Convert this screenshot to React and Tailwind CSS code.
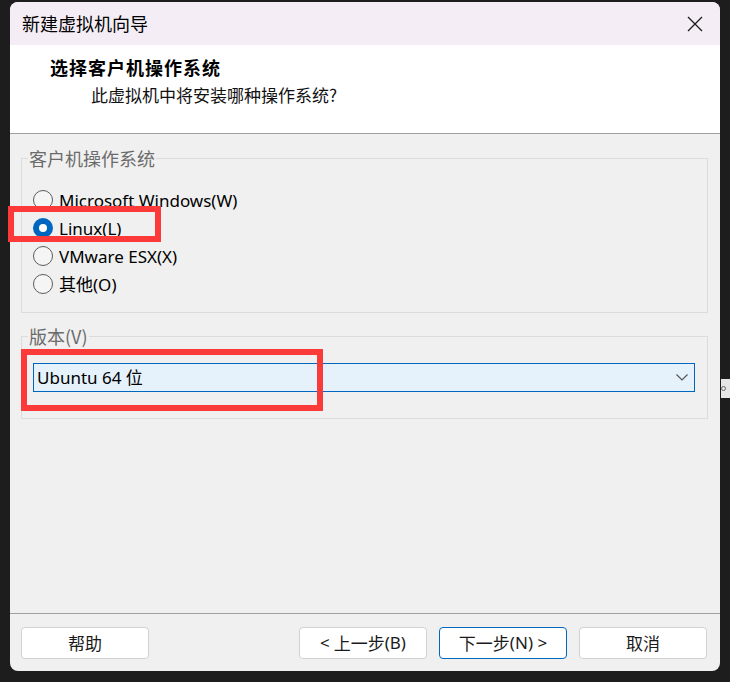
import React, { useState } from 'react';

const cjk = '"Noto Sans CJK SC", "Noto Sans", sans-serif';
const ui = '"Noto Sans", "Noto Sans CJK SC", sans-serif';

const Radio = ({ label, checked, onSelect }) => (
  <div className="flex items-center h-[28px] gap-[6px] cursor-default" onClick={onSelect}>
    {checked ? (
      <span className="w-[20px] h-[20px] rounded-full bg-[#0067c0] flex items-center justify-center">
        <span className="w-[8px] h-[8px] rounded-full bg-white" />
      </span>
    ) : (
      <span className="w-[20px] h-[20px] rounded-full border border-[#5c5c5c] bg-[#f5f5f5]" />
    )}
    <span className="text-[17px] text-black leading-none">{label}</span>
  </div>
);

const Button = ({ children, primary }) => (
  <button
    className={
      'w-[128px] h-[32px] rounded-[4px] bg-white text-[17px] text-[#1b1b1b] flex items-center justify-center border ' +
      (primary ? 'border-[#0067c0]' : 'border-[#d2d2d2]')
    }
  >
    {children}
  </button>
);

const App = () => {
  const [os, setOs] = useState('linux');
  const options = [
    { id: 'win', label: 'Microsoft Windows(W)' },
    { id: 'linux', label: 'Linux(L)' },
    { id: 'esx', label: 'VMware ESX(X)' },
    { id: 'other', label: '其他(O)' },
  ];

  return (
    <div className="w-[730px] h-[682px] bg-[#1d1d1d] pt-[2px] pl-[10px] relative" style={{ fontFamily: ui }}>
      <div className="w-[710px] h-[669px] rounded-[8px] overflow-hidden flex flex-col bg-[#f0f0f0]">
        {/* Title bar */}
        <div className="h-[43px] bg-[#f5edf6] flex items-center justify-between pl-[12px] pr-[16px] shrink-0">
          <span className="text-[18px] text-black" style={{ fontFamily: cjk }}>新建虚拟机向导</span>
          <svg width="16" height="16" viewBox="0 0 16 16" className="mr-[1px]">
            <path d="M1 1 L15 15 M15 1 L1 15" stroke="#1a1a1a" strokeWidth="1.3" fill="none" />
          </svg>
        </div>

        {/* Header */}
        <div className="h-[89px] bg-white border-b border-[#a0a0a0] shrink-0 pt-[8px]" style={{ fontFamily: cjk }}>
          <div className="pl-[40px] text-[18px] font-bold text-black leading-[28px] tracking-[1px]">选择客户机操作系统</div>
          <div className="pl-[81px] text-[17px] text-[#111] leading-[28px]">此虚拟机中将安装哪种操作系统?</div>
        </div>

        {/* Body */}
        <div className="flex-1 flex flex-col px-[11px] pt-[12px]">
          <fieldset className="border border-[#dcdcdc] pl-[6px] pt-[16px] pb-[14px] mr-[1px]">
            <legend className="px-[1px] text-[18px] leading-[24px] text-[#6b6b6b]" style={{ fontFamily: cjk }}>客户机操作系统</legend>
            <div className="pl-[5px] flex flex-col">
              {options.map((o) => (
                <Radio key={o.id} label={o.label} checked={os === o.id} onSelect={() => setOs(o.id)} />
              ))}
            </div>
          </fieldset>

          <fieldset className="border border-[#dcdcdc] pl-[6px] pr-[12px] pt-[15px] pb-[26px] mt-[11px] mr-[1px]">
            <legend className="px-[1px] text-[18px] leading-[24px] text-[#6b6b6b]" style={{ fontFamily: cjk }}>版本(V)</legend>
            <div className="ml-[5px] h-[29px] bg-[#e5f1fb] border border-[#0067c0] flex items-center justify-between pl-[3px] pr-[6px]">
              <span className="text-[17px] text-black">Ubuntu 64 <span style={{ fontFamily: cjk }}>位</span></span>
              <svg width="12" height="7" viewBox="0 0 12 7">
                <path d="M0.5 0.5 L6 6 L11.5 0.5" stroke="#555" strokeWidth="1.2" fill="none" />
              </svg>
            </div>
          </fieldset>
        </div>

        {/* Footer */}
        <div className="h-[58px] border-t border-[#a0a0a0] flex items-start pt-[13px] pl-[11px] pr-[13px] shrink-0" style={{ fontFamily: cjk }}>
          <Button>帮助</Button>
          <div className="flex-1" />
          <div className="flex gap-[12px]">
            <Button>
              <span style={{ fontFamily: ui }}>&lt;</span>&nbsp;上一步<span style={{ fontFamily: ui }}>(B)</span>
            </Button>
            <Button primary>
              下一步<span style={{ fontFamily: ui }}>(N) &gt;</span>
            </Button>
            <Button>取消</Button>
          </div>
        </div>
      </div>

      {/* Annotation boxes */}
      <div className="absolute left-[8px] top-[206px] w-[153px] h-[36px] border-[6px] border-[#fd3a3a] pointer-events-none" />
      <div className="absolute left-[21px] top-[349px] w-[302px] h-[62px] border-[6px] border-[#fd3a3a] pointer-events-none" />

      {/* edge sliver */}
      <div className="absolute left-[721px] top-[379px] w-[9px] h-[19px] bg-[#e6e6e6] flex items-center">
        <span className="w-[5px] h-[5px] rounded-full border border-[#666]" />
      </div>
    </div>
  );
};

export default App;
